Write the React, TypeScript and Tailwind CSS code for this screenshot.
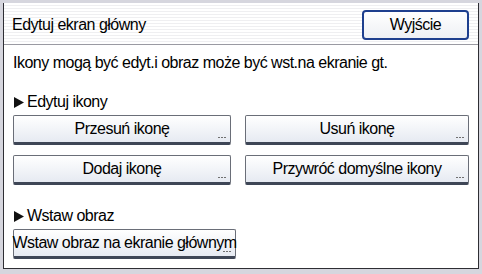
import React from "react";

const font = "font-['Liberation_Sans',sans-serif] tracking-[-0.5px]";

function Dots() {
  return (
    <span className="absolute right-[4px] bottom-[4px] flex gap-[1px]">
      <span className="w-[2px] h-[1px] bg-[#707070]" />
      <span className="w-[2px] h-[1px] bg-[#707070]" />
      <span className="w-[2px] h-[1px] bg-[#707070]" />
    </span>
  );
}

function MenuButton({ label, className = "" }: { label: string; className?: string }) {
  return (
    <button
      className={`relative h-[30px] flex items-center justify-center px-0 border border-[#6a6e78] border-b-[3px] border-b-[#3e4656] rounded-[2px] bg-gradient-to-b from-white to-[#e6eaf2] text-[16px] leading-none text-black whitespace-nowrap ${className}`}
    >
      {label}
      <Dots />
    </button>
  );
}

function SectionLabel({ text }: { text: string }) {
  return (
    <div className="flex items-center h-[20px] pl-[1px] text-[16px] leading-none text-black">
      <svg width="10" height="11" viewBox="0 0 10 11" className="mr-[3px]">
        <polygon points="0,0 10,5.5 0,11" fill="#111" />
      </svg>
      {text}
    </div>
  );
}

export default function App() {
  return (
    <div className={`w-[482px] h-[274px] bg-[#d6d6de] pt-[3px] px-[3px] pb-[5px] ${font}`}>
      <div className="h-full flex flex-col bg-white border-l border-r border-b border-[#2e2e34]">
        <header className="h-[42px] shrink-0 flex items-center justify-between pt-[2px] pl-[8px] pr-[9px] border-b border-[#9a9aa2] bg-[repeating-linear-gradient(to_bottom,#ffffff_0px,#ffffff_2px,#efeff1_2px,#efeff1_3px)]">
          <span className="text-[16px] leading-none text-black">Edytuj ekran główny</span>
          <button className="w-[107px] h-[30px] rounded-[4px] border-2 border-[#1e3f8e] bg-gradient-to-b from-white to-[#eef0f4] text-[16px] leading-none text-black">
            Wyjście
          </button>
        </header>
        <main className="flex-1 flex flex-col pl-[9px]">
          <p className="mt-[8px] h-[20px] flex items-center text-[16px] leading-none text-black">
            Ikony mogą być edyt.i obraz może być wst.na ekranie gt.
          </p>
          <div className="mt-[19px]">
            <SectionLabel text="Edytuj ikony" />
          </div>
          <div className="mt-[3px] grid grid-cols-[218px_224px] gap-x-[14px] gap-y-[10px]">
            <MenuButton label="Przesuń ikonę" />
            <MenuButton label="Usuń ikonę" />
            <MenuButton label="Dodaj ikonę" />
            <MenuButton label="Przywróć domyślne ikony" />
          </div>
          <div className="mt-[21px]">
            <SectionLabel text="Wstaw obraz" />
          </div>
          <div className="mt-[3px]">
            <MenuButton label="Wstaw obraz na ekranie głównym" className="w-[223px]" />
          </div>
        </main>
      </div>
    </div>
  );
}
